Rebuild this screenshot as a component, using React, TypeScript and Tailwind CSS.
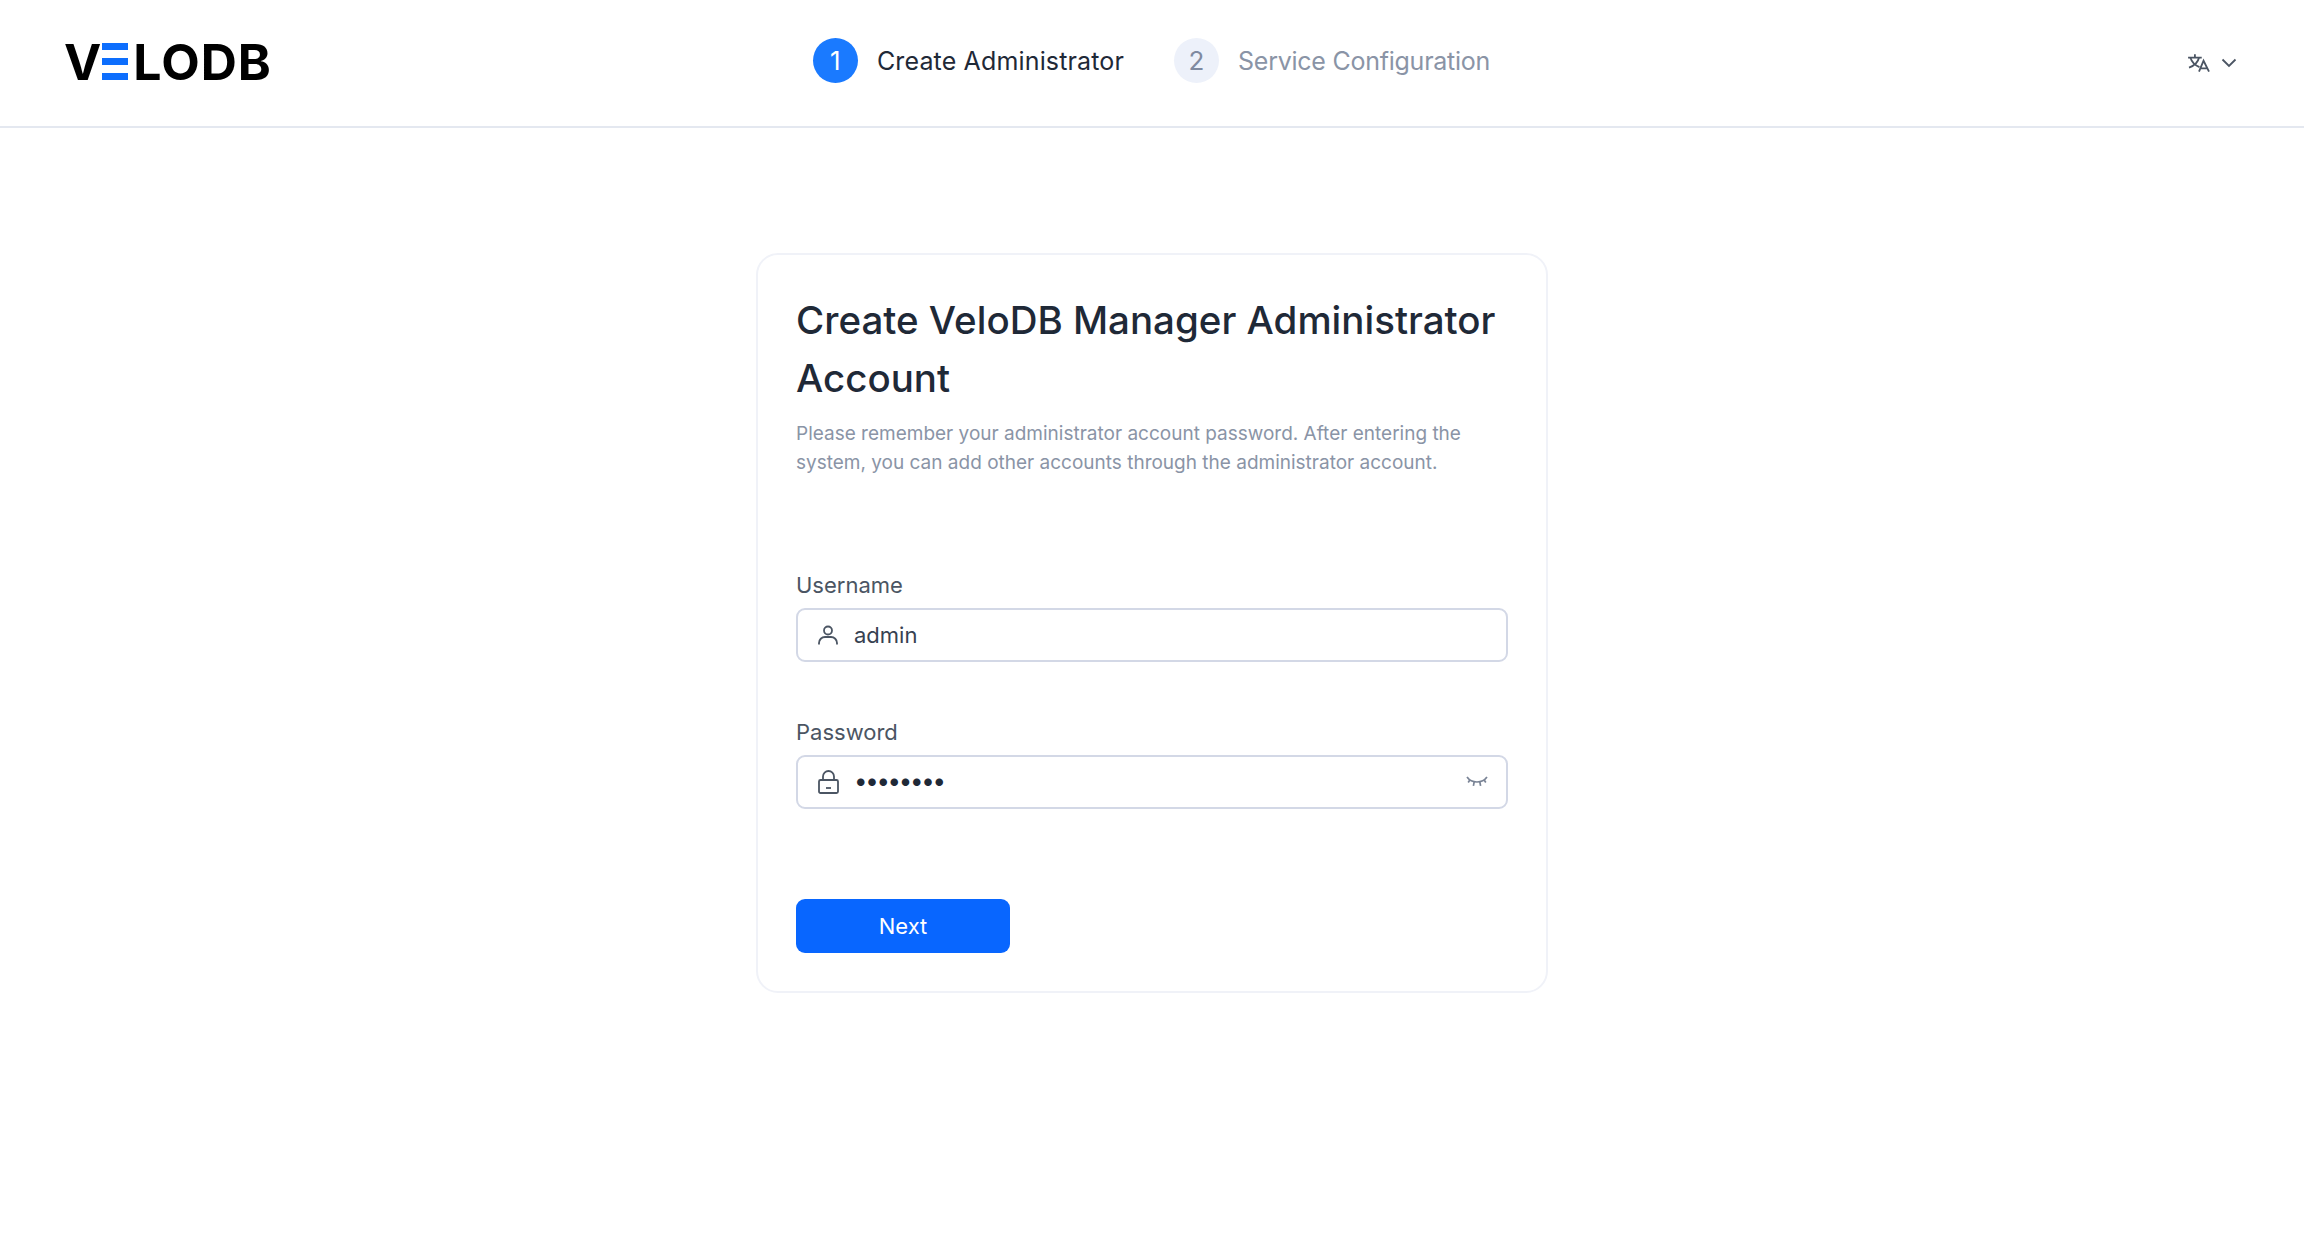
const Logo = () => (
  <div className="flex items-center font-['Inter',sans-serif] font-bold text-[50px] leading-[52px] text-black select-none">
    <span>V</span>
    <span className="ml-[1px] mr-[5px] flex h-[37px] w-[26px] flex-col justify-between">
      <span className="h-[7px] bg-[#0d6efd]" />
      <span className="h-[7px] bg-[#0d6efd]" />
      <span className="h-[7px] bg-[#0d6efd]" />
    </span>
    <span className="tracking-[1px]">LODB</span>
  </div>
);

const Step = ({ num, label, active }: { num: number; label: string; active?: boolean }) => (
  <div className="flex items-center gap-[19px]">
    <div
      className={
        active
          ? 'flex h-[45px] w-[45px] items-center justify-center rounded-full bg-[#1a7aff] text-[26px] text-white'
          : 'flex h-[45px] w-[45px] items-center justify-center rounded-full bg-[#edf1fa] text-[26px] text-[#7f8aa0]'
      }
    >
      {num}
    </div>
    <span
      className={
        active
          ? 'pt-[2px] text-[25px] tracking-[0.15px] text-[#1f2937]'
          : 'pt-[2px] text-[25px] tracking-[-0.25px] text-[#8a94a6]'
      }
    >
      {label}
    </span>
  </div>
);

const UserIcon = () => (
  <svg width="24" height="24" viewBox="0 0 24 24" fill="none" stroke="#4b5563" strokeWidth="1.8">
    <circle cx="12" cy="7.5" r="4" />
    <path d="M3 21.5v-1.5a6 6 0 0 1 6-6h6a6 6 0 0 1 6 6v1.5" />
  </svg>
);

const LockIcon = () => (
  <svg width="24" height="24" viewBox="0 0 24 24" fill="none" stroke="#4b5563" strokeWidth="1.8">
    <rect x="3" y="10" width="19" height="13" rx="1.5" />
    <path d="M7 10V6.500a5.500 5.500 0 0 1 11 0V10" />
    <path d="M10 18h5" />
  </svg>
);

const EyeClosedIcon = () => (
  <svg className="mt-[2px]" width="22" height="16" viewBox="0 0 22 16" fill="none" stroke="#7a8496" strokeWidth="1.7">
    <path d="M1 2c2.500 3.500 5.800 5 10 5s7.500-1.500 10-5" />
    <path d="M4 4.800 2.200 7.500M8.200 6.800l-.8 4M13.800 6.800l.8 4M18 4.800l1.800 2.700" />
  </svg>
);

const LanguageIcon = () => (
  <svg width="24" height="20" viewBox="0 0 26 22" fill="none" stroke="#4b5563" strokeWidth="2">
    <path d="M1 5h15M8.500 1.500V5" />
    <path d="M3.500 5c1.500 5 5 8.500 10 10.500M13 5c-1 5-5 9-11 11" />
    <path d="M13 20.500 18 8.500l6 12M14.800 17h7.400" />
  </svg>
);

const Field = ({
  label,
  icon,
  children,
  trailing,
}: {
  label: string;
  icon: React.ReactNode;
  children: React.ReactNode;
  trailing?: React.ReactNode;
}) => (
  <div>
    <div className="mb-[6px] text-[22px] leading-[34px] text-[#4b5563]">{label}</div>
    <div className="flex h-[54px] items-center rounded-[9px] border-2 border-[#d3d8e6] bg-white pl-[18px] pr-[18px]">
      {icon}
      <div className="ml-[14px] flex-1 text-[22px] text-[#374151]">{children}</div>
      {trailing}
    </div>
  </div>
);

export default function App() {
  return (
    <div className="min-h-screen bg-white font-['Inter',sans-serif]">
      <header className="grid h-[128px] grid-cols-[1fr_auto_1fr] items-center border-b-2 border-[#e4e8f0] pb-[3px] pl-[64px] pr-[67px]">
        <Logo />
        <div className="ml-[2px] flex items-center gap-[50px] pb-[2px]">
          <Step num={1} label="Create Administrator" active />
          <Step num={2} label="Service Configuration" />
        </div>
        <div className="flex items-center justify-end gap-[10px] pt-[3px]">
          <LanguageIcon />
          <svg width="16" height="10" viewBox="0 0 16 10" fill="none" stroke="#4b5563" strokeWidth="1.8">
            <path d="M1.500 1.500 8 8l6.500-6.500" />
          </svg>
        </div>
      </header>

      <main className="flex justify-center pt-[125px]">
        <div className="h-[740px] w-[792px] rounded-[22px] border-2 border-[#f0f2f8] px-[38px] pt-[36px]">
          <h1 className="text-[38.5px] font-medium leading-[58px] text-[#1f2937]">
            Create VeloDB Manager Administrator Account
          </h1>
          <p className="mt-[12px] w-[690px] text-[19px] leading-[29px] text-[#8a94a6]">
            Please remember your administrator account password. After entering the system, you can add other accounts
            through the administrator account.
          </p>

          <div className="mt-[91px] flex flex-col gap-[53px]">
            <Field label="Username" icon={<UserIcon />}>
              admin
            </Field>
            <Field label="Password" icon={<LockIcon />} trailing={<EyeClosedIcon />}>
              <span className="block -translate-y-[1px] text-[24px] tracking-[-2.300px] text-[#1f2937]">••••••••</span>
            </Field>
          </div>

          <button className="mt-[90px] h-[54px] w-[214px] rounded-[9px] bg-[#0866ff] text-[22px] text-white">
            Next
          </button>
        </div>
      </main>
    </div>
  );
}
